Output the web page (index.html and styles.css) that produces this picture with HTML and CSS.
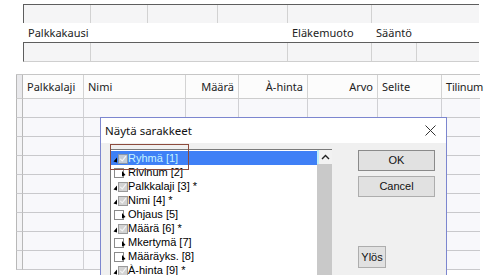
FILE: index.html
```html
<!DOCTYPE html>
<html>
<head>
<meta charset="utf-8">
<link rel="stylesheet" href="styles.css">
</head>
<body>
<div class="page">
  <div class="top">
    <div class="frow r1">
      <div class="fc" style="width:67px"></div>
      <div class="fc" style="width:57px"></div>
      <div class="fc" style="width:70px"></div>
      <div class="fc" style="width:70px"></div>
      <div class="fc" style="width:84px"></div>
      <div class="fc last"></div>
    </div>
    <div class="labels">
      <span class="lab l1">Palkkakausi</span>
      <span class="lab l2">Eläkemuoto</span>
      <span class="lab l3">Sääntö</span>
    </div>
    <div class="frow r2">
      <div class="fc" style="width:67px"></div>
      <div class="fc" style="width:197px"></div>
      <div class="fc" style="width:84px"></div>
      <div class="fc" style="width:45px"></div>
      <div class="fc last"></div>
    </div>
  </div>

  <div class="grid">
    <div class="gh rh"></div>
    <div class="gh">Palkkalaji</div>
    <div class="gh">Nimi</div>
    <div class="gh num">Määrä</div>
    <div class="gh num">À-hinta</div>
    <div class="gh num">Arvo</div>
    <div class="gh">Selite</div>
    <div class="gh clip">Tilinum</div>
  </div>
  <div class="rows">
    <div class="grow"><i></i><i></i><i></i><i></i><i></i><i></i><i></i><i></i></div>
    <div class="grow"><i></i><i></i><i></i><i></i><i></i><i></i><i></i><i></i></div>
    <div class="grow"><i></i><i></i><i></i><i></i><i></i><i></i><i></i><i></i></div>
    <div class="grow"><i></i><i></i><i></i><i></i><i></i><i></i><i></i><i></i></div>
    <div class="grow"><i></i><i></i><i></i><i></i><i></i><i></i><i></i><i></i></div>
    <div class="grow"><i></i><i></i><i></i><i></i><i></i><i></i><i></i><i></i></div>
    <div class="grow"><i></i><i></i><i></i><i></i><i></i><i></i><i></i><i></i></div>
    <div class="grow"><i></i><i></i><i></i><i></i><i></i><i></i><i></i><i></i></div>
    <div class="grow"><i></i><i></i><i></i><i></i><i></i><i></i><i></i><i></i></div>
  </div>

  <div class="dialog">
    <div class="dtitle">
      <span>Näytä sarakkeet</span>
      <svg class="close" width="11" height="11" viewBox="0 0 11 11"><path d="M0.5 0.5L10.5 10.5M10.5 0.5L0.5 10.5" stroke="#333" stroke-width="1"/></svg>
    </div>
    <div class="dbody">
      <div class="listbox">
        <div class="items">
          <div class="item sel"><svg class="ic" width="15" height="11" viewBox="0 0 15 11"><path d="M0.5 8.5L4 4.5L4 9.5Z" fill="#000"/><rect x="5.5" y="1.5" width="9" height="9" fill="#c3cbd6" stroke="#8a96a8"/><path d="M7.2 5.8L9.3 7.9L13 3.2" stroke="#f4f4f4" stroke-width="1.2" fill="none"/></svg><span class="t">Ryhmä [1]</span></div>
          <div class="item"><svg class="ic" width="15" height="11" viewBox="0 0 15 11"><rect x="1.5" y="1.5" width="9" height="9" fill="#fff" stroke="#8a8a8a"/><path d="M9 4L12.5 8L9 9.5Z" fill="#000"/></svg><span class="t">Rivinum [2]</span></div>
          <div class="item"><svg class="ic" width="15" height="11" viewBox="0 0 15 11"><path d="M0.5 8.5L4 4.5L4 9.5Z" fill="#000"/><rect x="5.5" y="1.5" width="9" height="9" fill="#d2d2d2" stroke="#9a9a9a"/><path d="M7.2 5.8L9.3 7.9L13 3.2" stroke="#f4f4f4" stroke-width="1.2" fill="none"/></svg><span class="t">Palkkalaji [3] *</span></div>
          <div class="item"><svg class="ic" width="15" height="11" viewBox="0 0 15 11"><path d="M0.5 8.5L4 4.5L4 9.5Z" fill="#000"/><rect x="5.5" y="1.5" width="9" height="9" fill="#d2d2d2" stroke="#9a9a9a"/><path d="M7.2 5.8L9.3 7.9L13 3.2" stroke="#f4f4f4" stroke-width="1.2" fill="none"/></svg><span class="t">Nimi [4] *</span></div>
          <div class="item"><svg class="ic" width="15" height="11" viewBox="0 0 15 11"><rect x="1.5" y="1.5" width="9" height="9" fill="#fff" stroke="#8a8a8a"/><path d="M9 4L12.5 8L9 9.5Z" fill="#000"/></svg><span class="t">Ohjaus [5]</span></div>
          <div class="item"><svg class="ic" width="15" height="11" viewBox="0 0 15 11"><path d="M0.5 8.5L4 4.5L4 9.5Z" fill="#000"/><rect x="5.5" y="1.5" width="9" height="9" fill="#d2d2d2" stroke="#9a9a9a"/><path d="M7.2 5.8L9.3 7.9L13 3.2" stroke="#f4f4f4" stroke-width="1.2" fill="none"/></svg><span class="t">Määrä [6] *</span></div>
          <div class="item"><svg class="ic" width="15" height="11" viewBox="0 0 15 11"><rect x="1.5" y="1.5" width="9" height="9" fill="#fff" stroke="#8a8a8a"/><path d="M9 4L12.5 8L9 9.5Z" fill="#000"/></svg><span class="t">Mkertymä [7]</span></div>
          <div class="item"><svg class="ic" width="15" height="11" viewBox="0 0 15 11"><rect x="1.5" y="1.5" width="9" height="9" fill="#fff" stroke="#8a8a8a"/><path d="M9 4L12.5 8L9 9.5Z" fill="#000"/></svg><span class="t">Määräyks. [8]</span></div>
          <div class="item"><svg class="ic" width="15" height="11" viewBox="0 0 15 11"><path d="M0.5 8.5L4 4.5L4 9.5Z" fill="#000"/><rect x="5.5" y="1.5" width="9" height="9" fill="#d2d2d2" stroke="#9a9a9a"/><path d="M7.2 5.8L9.3 7.9L13 3.2" stroke="#f4f4f4" stroke-width="1.2" fill="none"/></svg><span class="t">À-hinta [9] *</span></div>
        </div>
        <div class="sbar">
          <div class="sup"><svg width="9" height="6" viewBox="0 0 9 6"><path d="M1 5L4.5 1.5L8 5" stroke="#222" stroke-width="1.4" fill="none"/></svg></div>
          <div class="strack"></div>
        </div>
      </div>
      <div class="btns">
        <div class="btn def">OK</div>
        <div class="btn">Cancel</div>
        <div class="btn small">Ylös</div>
      </div>
      <div class="mark"></div>
    </div>
  </div>
</div>
</body>
</html>
```
FILE: styles.css
```css
html, body {
  margin: 0;
  padding: 0;
  background: #fff;
}
.page {
  position: relative;
  width: 494px;
  height: 275px;
  overflow: hidden;
  font-family: "Noto Sans", "Open Sans", sans-serif;
  font-size: 11px;
  color: #222;
}
.top {
  padding: 4px 0 0 23px;
}
.frow {
  display: flex;
  width: 456px;
  height: 19px;
  box-sizing: border-box;
  border-top: 1px solid #5e5e5e;
  border-left: 1px solid #5e5e5e;
  background: #f5f5f6;
}
.r2 {
  height: 20px;
  border-bottom: 1px solid #cfcfcf;
}
.fc {
  box-sizing: border-box;
  border-right: 1px solid #d2d2d2;
  height: 100%;
}
.fc.last {
  flex: 1;
  border-right: none;
}
.labels {
  display: flex;
  height: 19px;
  align-items: center;
  width: 456px;
  background: #fff;
}
.lab {
  box-sizing: border-box;
  padding-left: 5px;
  line-height: 19px;
}
.l1 { width: 264px; }
.l2 { width: 84px; }
.l3 { width: 60px; }

.grid {
  margin: 12px 0 0 16px;
  display: grid;
  grid-template-columns: 7px 61px 102px 53px 69px 70px 64px 38px;
  border-top: 1px solid #c6c6c6;
  width: 464px;
}
.gh {
  box-sizing: border-box;
  height: 24px;
  line-height: 23px;
  border-right: 1px solid #d3d3d3;
  border-bottom: 1px solid #cdcdcd;
  padding: 0 4px;
  background: #fcfcfc;
  white-space: nowrap;
  overflow: hidden;
}
.gh.rh {
  border-left: 1px solid #b8b8b8;
  border-right: 1px solid #b8b8b8;
  background: #e9e9ec;
  padding: 0;
}
.gh.num { text-align: right; }
.gh.clip {
  border-right: none;
  padding: 0 0 0 4px;
  overflow: visible;
  letter-spacing: -0.2px;
}
.rows {
  margin-left: 16px;
  width: 464px;
}
.grow {
  display: grid;
  grid-template-columns: 7px 61px 102px 53px 69px 70px 64px 38px;
  height: 19px;
}
.grow i {
  box-sizing: border-box;
  border-right: 1px solid #d0d0d4;
  border-bottom: 1px solid #c9c9cc;
  background: #f8f8fb;
}
.grow i:first-child {
  border-left: 1px solid #b8b8b8;
  border-right: 1px solid #b8b8b8;
  background: #f4f4f6;
}
.grow i:last-child { border-right: none; }

.dialog {
  position: absolute;
  left: 100px;
  top: 117px;
  width: 347px;
  height: 180px;
  box-sizing: border-box;
  border: 1px solid #7c86cf;
  background: #f0f0f0;
}
.dtitle {
  height: 25px;
  background: #fff;
  display: flex;
  align-items: center;
  justify-content: space-between;
  padding: 0 10px 0 4px;
  font-size: 11.5px;
  color: #111;
}
.dbody {
  position: relative;
  display: flex;
  padding: 6px 0 0 9px;
  font-family: "Liberation Sans", Arial, sans-serif;
  font-size: 11px;
  color: #000;
}
.listbox {
  display: flex;
  width: 222px;
  height: 140px;
  box-sizing: border-box;
  border-top: 1px solid #7a7a7a;
  border-left: 1px solid #7a7a7a;
  background: #fff;
}
.items {
  flex: 1;
  padding: 1px 0 0 0;
}
.item {
  display: flex;
  align-items: center;
  height: 14px;
  padding-left: 2px;
  white-space: nowrap;
}
.item .ic { flex: none; }
.item.sel {
  background: #3f80f6;
}
.item.sel .t { color: #c6f4ff; }
.sbar {
  width: 15px;
  display: flex;
  flex-direction: column;
}
.sup {
  height: 14px;
  display: flex;
  align-items: center;
  justify-content: center;
  background: #f2f2f2;
  border-left: 2px solid #bff0f8;
}
.strack {
  flex: 1;
  background: #c9c9c9;
}
.btns {
  margin-left: 26px;
  padding-top: 1px;
  display: flex;
  flex-direction: column;
  gap: 5px;
}
.btn {
  box-sizing: border-box;
  width: 77px;
  height: 21px;
  line-height: 19px;
  text-align: center;
  background: #e1e1e1;
  border: 1px solid #adadad;
  color: #111;
}
.btn.def { border-color: #8a8a8a; }
.btn.small {
  width: 28px;
  height: 22px;
  line-height: 20px;
  margin-top: 44px;
}
.mark {
  position: absolute;
  left: 9px;
  top: 1px;
  width: 79px;
  height: 26px;
  box-sizing: border-box;
  border: 1.5px solid #8d4b3d;
}
```
